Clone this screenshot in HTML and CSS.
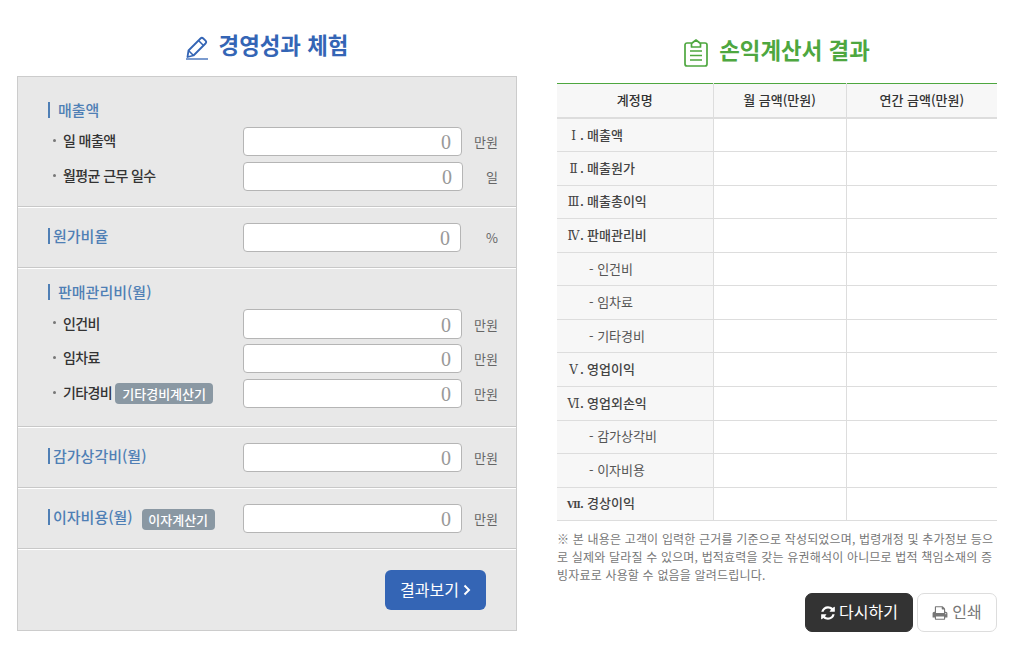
FILE: index.html
```html
<!DOCTYPE html>
<html lang="ko">
<head>
<meta charset="utf-8">
<title>경영성과 체험</title>
<link rel="stylesheet" href="styles.css">
</head>
<body>
<main class="page">
  <div class="col-left">
    <h2 class="title title-blue">
      <svg class="icon-pencil" viewBox="0 0 22 24" aria-hidden="true">
        <path d="M2.5 14.5 14.5 2.5a2 2 0 0 1 2.8 0l2.2 2.2a2 2 0 0 1 0 2.8L7.5 19.5l-6 1.5Z" fill="none" stroke="currentColor" stroke-width="1.8" stroke-linejoin="round"/>
        <path d="M12.5 4.5l5 5M2.5 14.5l5 5" fill="none" stroke="currentColor" stroke-width="1.5"/>
        <path d="M0 23h22" stroke="currentColor" stroke-width="1.3"/>
      </svg>
      <span>경영성과 체험</span>
    </h2>
    <form class="panel">
      <section class="sec">
        <h3 class="sec-title gap">매출액</h3>
        <div class="rows">
          <div class="row"><label class="lab">일 매출액</label><input class="inp" value="0"><span class="unit">만원</span></div>
          <div class="row"><label class="lab">월평균 근무 일수</label><input class="inp w220" value="0"><span class="unit">일</span></div>
        </div>
      </section>
      <section class="sec">
        <div class="row">
          <div class="head"><h3 class="sec-title">원가비율</h3></div>
          <input class="inp w218" value="0"><span class="unit">%</span>
        </div>
      </section>
      <section class="sec sec-tight">
        <h3 class="sec-title gap">판매관리비(월)</h3>
        <div class="rows rows-var">
          <div class="row"><label class="lab">인건비</label><input class="inp h30" value="0"><span class="unit">만원</span></div>
          <div class="row"><label class="lab">임차료</label><input class="inp" value="0"><span class="unit">만원</span></div>
          <div class="row"><label class="lab">기타경비<button type="button" class="badge badge-a">기타경비계산기</button></label><input class="inp" value="0"><span class="unit">만원</span></div>
        </div>
      </section>
      <section class="sec">
        <div class="row">
          <div class="head"><h3 class="sec-title">감가상각비(월)</h3></div>
          <input class="inp" value="0"><span class="unit">만원</span>
        </div>
      </section>
      <section class="sec">
        <div class="row">
          <div class="head"><h3 class="sec-title">이자비용(월)</h3><button type="button" class="badge badge-b">이자계산기</button></div>
          <input class="inp" value="0"><span class="unit">만원</span>
        </div>
      </section>
      <div class="foot">
        <button type="button" class="btn-result"><span class="btn-text">결과보기</span><svg class="chev" viewBox="0 0 8 12" aria-hidden="true"><path d="M1.5 1.5 6 6l-4.5 4.5" fill="none" stroke="currentColor" stroke-width="2"/></svg></button>
      </div>
    </form>
  </div>
  <div class="col-right">
    <h2 class="title title-green">
      <svg class="icon-clip" viewBox="0 0 24 28" aria-hidden="true">
        <path d="M7.5 4H3a2 2 0 0 0-2 2v19a2 2 0 0 0 2 2h18a2 2 0 0 0 2-2V6a2 2 0 0 0-2-2h-4.500" fill="none" stroke="currentColor" stroke-width="1.700"/>
        <path d="M7.500 8V4.500L12 1l4.500 3.500V8Z" fill="none" stroke="currentColor" stroke-width="1.700" stroke-linejoin="round"/>
        <path d="M6 12h12M6 16.500h12M6 21h12" stroke="currentColor" stroke-width="1.600"/>
      </svg>
      <span>손익계산서 결과</span>
    </h2>
    <table class="tbl">
      <colgroup><col class="c1"><col class="c2"><col class="c3"></colgroup>
      <thead><tr><th>계정명</th><th>월 금액(만원)</th><th>연간 금액(만원)</th></tr></thead>
      <tbody>
        <tr><th class="m"><span class="num"><i>Ⅰ</i>.</span>매출액</th><td></td><td></td></tr>
        <tr><th class="m"><span class="num"><i>Ⅱ</i>.</span>매출원가</th><td></td><td></td></tr>
        <tr><th class="m"><span class="num"><i>Ⅲ</i>.</span>매출총이익</th><td></td><td></td></tr>
        <tr><th class="m"><span class="num"><i>Ⅳ</i>.</span>판매관리비</th><td></td><td></td></tr>
        <tr><th class="s">- 인건비</th><td></td><td></td></tr>
        <tr><th class="s">- 임차료</th><td></td><td></td></tr>
        <tr><th class="s">- 기타경비</th><td></td><td></td></tr>
        <tr><th class="m"><span class="num"><i>Ⅴ</i>.</span>영업이익</th><td></td><td></td></tr>
        <tr><th class="m"><span class="num"><i>Ⅵ</i>.</span>영업외손익</th><td></td><td></td></tr>
        <tr><th class="s">- 감가상각비</th><td></td><td></td></tr>
        <tr><th class="s">- 이자비용</th><td></td><td></td></tr>
        <tr><th class="m"><span class="num"><i class="tight">Ⅶ</i>.</span>경상이익</th><td></td><td></td></tr>
      </tbody>
    </table>
    <p class="note">※ 본 내용은 고객이 입력한 근거를 기준으로 작성되었으며, 법령개정 및 추가정보 등으로 실제와 달라질 수 있으며, 법적효력을 갖는 유권해석이 아니므로 법적 책임소재의 증빙자료로 사용할 수 없음을 알려드립니다.</p>
    <div class="actions">
      <button type="button" class="btn btn-dark"><svg class="ico" viewBox="0 0 1792 1792" aria-hidden="true"><path fill="currentColor" d="M1639 1056q0 5-1 7-64 268-268 434.5t-478 166.5q-146 0-282.5-55t-243.5-157l-129 129q-19 19-45 19t-45-19-19-45v-448q0-26 19-45t45-19h448q26 0 45 19t19 45-19 45l-137 137q71 66 161 102t187 36q134 0 250-65t186-179q11-17 53-117 8-23 30-23h192q13 0 22.5 9.5t9.5 22.5zm25-800v448q0 26-19 45t-45 19h-448q-26 0-45-19t-19-45 19-45l138-138q-148-137-349-137-134 0-250 65t-186 179q-11 17-53 117-8 23-30 23h-199q-13 0-22.5-9.5t-9.5-22.5v-7q65-268 270-434.5t480-166.5q146 0 284 55.5t245 156.5l130-129q19-19 45-19t45 19 19 45z"/></svg><span class="btn-text">다시하기</span></button>
      <button type="button" class="btn btn-light"><svg class="ico" viewBox="0 0 1792 1792" aria-hidden="true"><path fill="currentColor" d="M448 1536h896v-256h-896v256zm0-640h896v-384h-160q-40 0-68-28t-28-68v-160h-640v640zm1152 64q0-26-19-45t-45-19-45 19-19 45 19 45 45 19 45-19 19-45zm128 0v416q0 13-9.500 22.500t-22.500 9.500h-224v160q0 40-28 68t-68 28h-960q-40 0-68-28t-28-68v-160h-224q-13 0-22.500-9.500t-9.500-22.500v-416q0-79 56.500-135.500t135.500-56.500h64v-544q0-40 28-68t68-28h672q40 0 88 20t76 48l152 152q28 28 48 76t20 88v256h64q79 0 135.500 56.500t56.500 135.500z"/></svg><span class="btn-text">인쇄</span></button>
    </div>
  </div>
</main>
</body>
</html>
```
FILE: styles.css
```css
* { box-sizing: border-box; }
html, body { margin: 0; padding: 0; background: #fff; }
body { font-family: "Noto Sans CJK KR", "Noto Sans", sans-serif; color: #333; }
button { font-family: inherit; cursor: pointer; }
.page { display: flex; align-items: flex-start; padding-left: 17px; width: 1027px; height: 662px; overflow: hidden; }
.col-left { width: 500px; }
.col-right { width: 440px; margin-left: 40px; }

.title { display: flex; align-items: center; justify-content: center; margin: 0; font-size: 22.4px; line-height: 30px; font-weight: 700; letter-spacing: 0; }
.title-blue { color: #3465b5; height: 76px; padding-top: 28px; padding-bottom: 16px; gap: 11px; }
.title-green { color: #4ea73f; height: 83px; padding-top: 32px; padding-bottom: 17px; gap: 11px; }
.icon-pencil { width: 22px; height: 24px; flex: none; margin-top: 7px; }
.icon-clip { width: 24px; height: 28px; flex: none; margin-top: 7px; }

.panel { display: block; background: #e8e8e8; border: 1px solid #ccc; }
.sec { padding: 15px 18px 15px 30px; border-bottom: 1px solid #c8c8c8; border-top: 1px solid #fff; }
.sec:first-child { border-top: 0; padding-top: 25px; }
.sec-tight { padding-bottom: 18px; }
.sec-title { display: block; margin: 0; padding-left: 3px; border-left: 2px solid #4f7fb5; font-size: 15px; line-height: 16px; font-weight: 500; color: #4f7fb5; white-space: nowrap; }
.sec-title.gap { padding-left: 8px; margin-bottom: 9px; }
.rows { display: flex; flex-direction: column; gap: 6px; }
.rows-var .row:first-child { margin-bottom: -1px; }
.row { display: flex; align-items: center; }
.lab { display: flex; align-items: center; width: 195px; flex: none; padding-left: 15px; padding-bottom: 3px; font-size: 14px; font-weight: 500; letter-spacing: -0.6px; color: #333; position: relative; white-space: nowrap; }
.lab::before { content: ""; position: absolute; left: 5px; top: 50%; width: 3px; height: 3px; margin-top: -3px; border-radius: 50%; background: #777; }
.head { display: flex; align-self: flex-start; align-items: flex-start; width: 195px; flex: none; padding-top: 5px; }
.inp { display: block; width: 219px; height: 29px; flex: none; padding: 2px 10px 0 8px; border: 1px solid #b5b5b5; border-radius: 4px; background: #fff; text-align: right; font-family: "Liberation Serif", serif; font-size: 20px; color: #999; outline: none; }
.w220 { width: 220px; }
.w218 { width: 218px; }
.h30 { height: 30px; }
.unit { flex: 1; text-align: right; font-size: 13px; color: #666; }
.badge { display: inline-flex; align-items: center; justify-content: center; height: 21px; padding: 0; border: 0; border-radius: 4px; background: #8a98a3; color: #fff; font-size: 13px; font-weight: 500; letter-spacing: 0; white-space: nowrap; }
.badge-a { width: 98px; margin-left: 3px; margin-bottom: -3px; }
.badge-b { width: 73px; margin-left: 9px; }
.foot { display: flex; justify-content: flex-end; padding: 20px 30px 20px 0; border-top: 1px solid #fff; }
.btn-result { display: flex; align-items: center; justify-content: center; gap: 4px; width: 101px; height: 40px; padding: 0; border: 0; border-radius: 6px; background: #3465b5; color: #fff; font-size: 16px; }
.btn-text { padding-bottom: 3px; }
.chev { width: 8px; height: 12px; }

.tbl { width: 440px; table-layout: fixed; border-collapse: collapse; border-top: 1px solid #4ea73f; font-size: 13px; }
.c1 { width: 156px; }
.c2 { width: 133px; }
.c3 { width: 151px; }
.tbl th, .tbl td { padding: 0 0 2px; border-bottom: 1px solid #ddd; border-right: 1px solid #ddd; height: 33.55px; }
.tbl tr > :last-child { border-right: 0; }
.tbl thead th { height: 34.6px; background: #f7f7f7; font-weight: 500; color: #333; border-bottom: 2px solid #ddd; }
.tbl tbody th { background: #f7f7f7; text-align: left; }
.tbl .m { font-weight: 500; color: #444; padding-left: 10px; }
.tbl .s { font-weight: 400; color: #555; padding-left: 32px; }
.num { display: inline-block; width: 20px; }
.num i { display: inline-block; width: 13px; text-align: center; font-family: "DejaVu Serif", serif; font-style: normal; font-size: 12px; font-weight: 400; }
.num .tight { font-size: 9px; font-weight: 700; }

.note { margin: 9px 0 0; font-size: 12px; line-height: 18px; letter-spacing: 0.18px; color: #777; word-break: break-all; }
.actions { display: flex; justify-content: flex-end; gap: 4px; margin-top: 9px; }
.btn { display: flex; align-items: center; justify-content: center; gap: 3px; height: 39px; padding: 0; border-radius: 7px; font-size: 16px; }
.btn-dark { width: 108px; background: #333; border: 1px solid #333; color: #fff; }
.btn-light { width: 80px; background: #fff; border: 1px solid #ddd; color: #777; gap: 4px; }
.ico { width: 16px; height: 16px; }
```
